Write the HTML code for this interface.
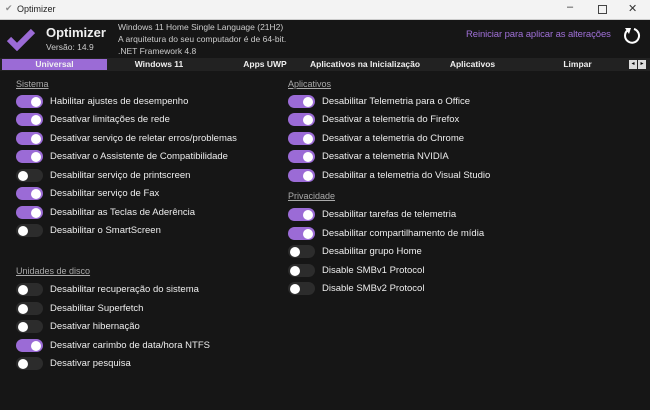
<!DOCTYPE html><html><head><style>
body{margin:0;width:650px;height:410px;background:#161616;font-family:"Liberation Sans",sans-serif;overflow:hidden;position:relative;color:#f0f0f0}
.a{position:absolute;white-space:nowrap}
.tb{left:0;top:0;width:650px;height:19px;background:#f3f3f3;border-bottom:1px solid #ccc}
.t{position:absolute;width:27px;height:13px;border-radius:7px;background:#9b6bd6}
.t:after{content:"";position:absolute;top:1.5px;right:2px;width:10px;height:10px;border-radius:50%;background:#fff}
.t.o{background:#2c2c2c}.t.o:after{right:auto;left:2px}
.l{position:absolute;font-size:9.5px;color:#eee;white-space:nowrap}
.s{position:absolute;font-size:9px;color:#aaa;text-decoration:underline}
.tab{position:absolute;top:59px;height:11px;font-size:8.5px;font-weight:bold;text-align:center;line-height:11px;white-space:nowrap}
</style></head><body>
<div class="a tb"></div>
<div class="a" style="left:5px;top:3px;font-size:9px;color:#8c8c8c">✔</div>
<div class="a" style="left:17px;top:4px;font-size:9px;color:#222">Optimizer</div>
<div class="a" style="left:567px;top:1px;font-size:11px;color:#333">–</div>
<div class="a" style="left:598px;top:5px;width:7px;height:7px;border:1px solid #444"></div>
<div class="a" style="left:628px;top:2px;font-size:11px;color:#333">✕</div>
<svg class="a" style="left:6px;top:27px" width="30" height="24"><path d="M3 12 L11 20 L27 4" stroke="#9b6bd6" stroke-width="6" fill="none"/></svg>
<div class="a" style="left:46px;top:25px;font-size:13px;font-weight:bold">Optimizer</div>
<div class="a" style="left:46px;top:42px;font-size:8.5px;color:#ccc">Versão: 14.9</div>
<div class="a" style="left:118px;top:21px;font-size:8.5px;color:#ccc;line-height:12px">Windows 11 Home Single Language (21H2)<br>A arquitetura do seu computador é de 64-bit.<br>.NET Framework 4.8</div>
<div class="a" style="left:466px;top:29px;font-size:9.5px;color:#a070d8;letter-spacing:-0.1px">Reiniciar para aplicar as alterações</div>
<svg class="a" style="left:622px;top:25px" width="20" height="20"><path d="M6 5 A7 7 0 1 0 12 4" stroke="#fff" stroke-width="2" fill="none"/><path d="M3 3 L9 3 L7 9Z" fill="#fff"/></svg>
<div class="a" style="left:0;top:58px;width:650px;height:13px;background:#222"></div>
<div class="tab" style="left:2px;width:105px;background:#9b6bd6">Universal</div>
<div class="tab" style="left:109px;width:100px">Windows 11</div>
<div class="tab" style="left:215px;width:100px">Apps UWP</div>
<div class="tab" style="left:310px;width:105px">Aplicativos na Inicialização</div>
<div class="tab" style="left:420px;width:105px">Aplicativos</div>
<div class="tab" style="left:525px;width:105px">Limpar</div>
<div class="a" style="left:629px;top:60px;width:8px;height:9px;background:#ddd;font-size:6px;color:#000;text-align:center">◂</div>
<div class="a" style="left:638px;top:60px;width:8px;height:9px;background:#ddd;font-size:6px;color:#000;text-align:center">▸</div>

<div class="s" style="left:16px;top:79px">Sistema</div>
<div class="t" style="left:16px;top:95px"></div><div class="l" style="left:50px;top:96px">Habilitar ajustes de desempenho</div>
<div class="t" style="left:16px;top:113px"></div><div class="l" style="left:50px;top:114px">Desativar limitações de rede</div>
<div class="t" style="left:16px;top:132px"></div><div class="l" style="left:50px;top:133px">Desativar serviço de reletar erros/problemas</div>
<div class="t" style="left:16px;top:150px"></div><div class="l" style="left:50px;top:151px">Desativar o Assistente de Compatibilidade</div>
<div class="t o" style="left:16px;top:169px"></div><div class="l" style="left:50px;top:170px">Desabilitar serviço de printscreen</div>
<div class="t" style="left:16px;top:187px"></div><div class="l" style="left:50px;top:188px">Desabilitar serviço de Fax</div>
<div class="t" style="left:16px;top:206px"></div><div class="l" style="left:50px;top:207px">Desabilitar as Teclas de Aderência</div>
<div class="t o" style="left:16px;top:224px"></div><div class="l" style="left:50px;top:225px">Desabilitar o SmartScreen</div>

<div class="s" style="left:16px;top:266px">Unidades de disco</div>
<div class="t o" style="left:16px;top:283px"></div><div class="l" style="left:50px;top:284px">Desabilitar recuperação do sistema</div>
<div class="t o" style="left:16px;top:302px"></div><div class="l" style="left:50px;top:303px">Desabilitar Superfetch</div>
<div class="t o" style="left:16px;top:320px"></div><div class="l" style="left:50px;top:321px">Desativar hibernação</div>
<div class="t" style="left:16px;top:339px"></div><div class="l" style="left:50px;top:340px">Desativar carimbo de data/hora NTFS</div>
<div class="t o" style="left:16px;top:357px"></div><div class="l" style="left:50px;top:358px">Desativar pesquisa</div>

<div class="s" style="left:288px;top:79px">Aplicativos</div>
<div class="t" style="left:288px;top:95px"></div><div class="l" style="left:322px;top:96px">Desabilitar Telemetria para o Office</div>
<div class="t" style="left:288px;top:113px"></div><div class="l" style="left:322px;top:114px">Desativar a telemetria do Firefox</div>
<div class="t" style="left:288px;top:132px"></div><div class="l" style="left:322px;top:133px">Desativar a telemetria do Chrome</div>
<div class="t" style="left:288px;top:150px"></div><div class="l" style="left:322px;top:151px">Desativar a telemetria NVIDIA</div>
<div class="t" style="left:288px;top:169px"></div><div class="l" style="left:322px;top:170px">Desabilitar a telemetria do Visual Studio</div>
<div class="s" style="left:288px;top:191px">Privacidade</div>
<div class="t" style="left:288px;top:208px"></div><div class="l" style="left:322px;top:209px">Desabilitar tarefas de telemetria</div>
<div class="t" style="left:288px;top:227px"></div><div class="l" style="left:322px;top:228px">Desabilitar compartilhamento de mídia</div>
<div class="t o" style="left:288px;top:245px"></div><div class="l" style="left:322px;top:246px">Desabilitar grupo Home</div>
<div class="t o" style="left:288px;top:264px"></div><div class="l" style="left:322px;top:265px">Disable SMBv1 Protocol</div>
<div class="t o" style="left:288px;top:282px"></div><div class="l" style="left:322px;top:283px">Disable SMBv2 Protocol</div>
</body></html>
